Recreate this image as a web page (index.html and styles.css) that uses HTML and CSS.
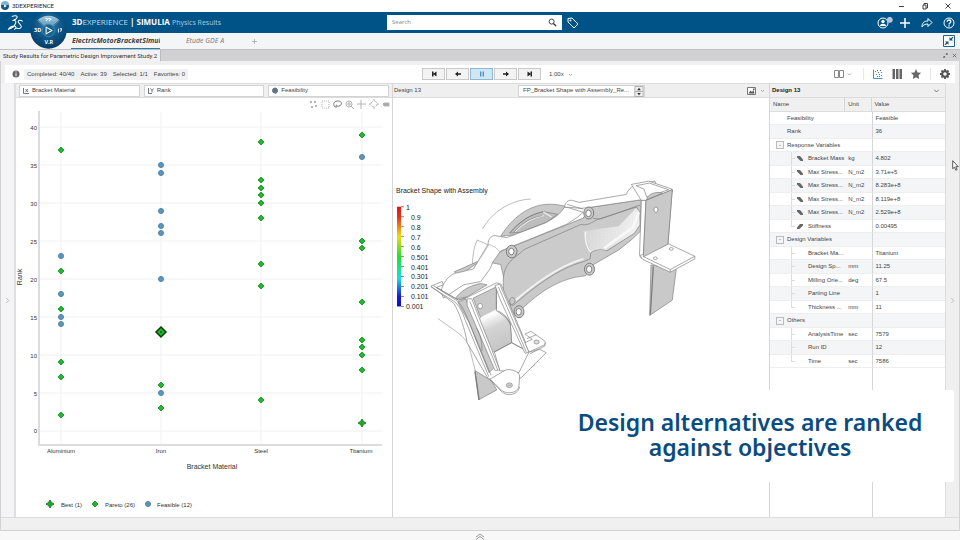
FILE: index.html
```html
<!DOCTYPE html>
<html lang="en">
<head>
<meta charset="utf-8">
<meta name="viewport" content="width=device-width, initial-scale=1">
<title>3DEXPERIENCE</title>
<link rel="stylesheet" href="styles.css">
</head>
<body>
<div class="titlebar">
  <svg class="app-icon" viewBox="0 0 10 10"><circle cx="5" cy="5" r="4" fill="#12598c"/><path d="M1 4a4 4 0 0 1 8 0z" fill="#7fb3d3"/><path d="M4 3.500v3L7 5z" fill="#fff"/></svg>
  <span class="app-name">3DEXPERIENCE</span>
  <div class="window-buttons">
    <button aria-label="Minimize"><svg viewBox="0 0 8 8"><path d="M1 4.500h5" /></svg></button>
    <button aria-label="Restore"><svg viewBox="0 0 8 8"><path d="M2 3h3v4H2zM3 3V1.500h3.500V6H5"/></svg></button>
    <button aria-label="Close"><svg viewBox="0 0 8 8"><path d="M1.500 1.500l5 5m0-5l-5 5"/></svg></button>
  </div>
</div>

<header class="topbar">
  <svg class="ds-logo" viewBox="21 42 50 50" fill="none" stroke="#fff" stroke-width="3" stroke-linecap="round" stroke-linejoin="round">
    <path d="M36 49c6-3 16-3 15 2-1 4-7 8-13 10 8-2 11 3 8 9-3 8-11 14-21 17 3-6 12-11 19-9 5 2 4 7-1 9"/>
    <path d="M66 63c-5-4-13-3-12 2s10 9 9 15c-1 5-9 6-14 3"/>
  </svg>
  <h1 class="brand"><b>3D</b><span>EXPERIENCE</span> <i>|</i> <b>SIMULIA</b> <em>Physics Results</em></h1>
  <div class="search">
    <input type="search" placeholder="Search" aria-label="Search">
    <svg viewBox="0 0 10 10" fill="none" stroke="#333"><circle cx="4" cy="4" r="2.800"/><path d="M6 6l3 3" stroke-width="1.500"/></svg>
  </div>
  <button class="tag" aria-label="Tags"><svg viewBox="0 0 12 12" fill="none" stroke="#fff" stroke-linejoin="round"><path d="M1 1.500l4-.5 6 6-4 4-6-6z"/><circle cx="3.500" cy="3.500" r=".6"/></svg></button>
  <nav class="top-actions">
    <button aria-label="Profile"><svg viewBox="0 0 16 12" fill="none" stroke="#fff"><circle cx="6" cy="6" r="5"/><circle cx="6" cy="4.500" r="1.700" fill="#fff" stroke="none"/><path d="M3 9c0-3 6-3 6 0z" fill="#fff" stroke="none"/><circle cx="12.800" cy="2.800" r="2.900" fill="#b9c6da" stroke="none"/></svg></button>
    <button aria-label="Add"><svg viewBox="0 0 12 12" stroke="#fff" stroke-width="1.500"><path d="M6 1v10M1 6h10"/></svg></button>
    <button aria-label="Share"><svg viewBox="0 0 12 12" fill="none" stroke="#fff" stroke-linejoin="round"><path d="M1 10c0-4 2-6 6-6V1.500l4 4-4 4V7C4 7 2 8 1 10z"/></svg></button>
    <button aria-label="Help"><svg viewBox="0 0 12 12" fill="none" stroke="#fff"><circle cx="6" cy="6" r="5"/><path d="M4.200 4.800c0-2.500 3.600-2.200 3.600-.2C7.800 6 6 6 6 7.500M6 8.300v1.200" stroke-width="1.300"/></svg></button>
  </nav>
  <button class="compass" aria-label="Compass">
    <svg viewBox="0 0 108 108">
      <defs>
        <radialGradient id="ball" cx=".5" cy=".35" r=".65"><stop offset="0" stop-color="#2b80ae"/><stop offset=".6" stop-color="#0e5485"/><stop offset="1" stop-color="#053a64"/></radialGradient>
        <linearGradient id="shine" x2="0" y2="1"><stop offset="0" stop-color="#a5c8da"/><stop offset="1" stop-color="#5a9abf"/></linearGradient>
      </defs>
      <circle cx="54" cy="54" r="53" fill="url(#ball)"/>
      <path d="M21 25a46 46 0 0 1 66 0L69 42a21 21 0 0 0-30 0z" fill="url(#shine)"/>
      <circle cx="54" cy="54" r="18" fill="#176393" stroke="#4f93b8" stroke-width="2"/>
      <path d="M47 44v20l17-10z" fill="none" stroke="#fff" stroke-width="3" stroke-linejoin="round"/>
      <path d="M22 23l17 17M86 23L69 40M25 85l15-16M83 85L68 69" stroke="#0a4573" stroke-width="2"/>
      <path d="M45 18l7 3-6 6M54 18l7 3-6 6" fill="none" stroke="#fff" stroke-width="3"/>
      <path d="M83 49v11M87 50c7-6 6 4 1 7" fill="none" stroke="#dce9f2" stroke-width="3"/>
      <text x="12" y="59">3D</text><text x="42" y="93">V.R</text>
    </svg>
  </button>
</header>

<nav class="tabs">
  <a href="#sim" class="tab active">ElectricMotorBracketSimul</a>
  <a href="#etude" class="tab">Etude GDE A</a>
  <button class="add-tab" aria-label="New tab"><svg viewBox="0 0 6 6" stroke="#aaa"><path d="M3 0v6M0 3h6"/></svg></button>
  <button class="collapse" aria-label="Exit full view"><svg viewBox="0 0 12 12"><path d="M.5.5h11v11H.5z" fill="#fff" stroke="#1d6493"/><path d="M6.500 2v3.500H10L8.800 4.300l1.700-1.700-.9-.9-1.800 1.700zM5.500 10V6.500H2l1.200 1.200-1.700 1.700.9.9 1.800-1.700z" fill="#174f78"/></svg></button>
</nav>

<div class="docbar">
  <h2>Study Results for Parametric Design Improvement Study.2</h2>
  <div class="doc-buttons">
    <button aria-label="Restore panel"><svg viewBox="0 0 6 6"><path d="M3.500.5v2h2L5 2l1-1-1-1zM2.500 5.500v-2h-2L1 4 0 5l1 1z" fill="#666"/></svg></button>
    <button aria-label="Close panel"><svg viewBox="0 0 6 6" stroke="#666"><path d="M1 1l4 4m0-4L1 5"/></svg></button>
  </div>
</div>

<main class="workspace">
  <div class="toolbar">
    <div class="status">
      <svg class="info" viewBox="0 0 8 8"><circle cx="4" cy="4" r="3.500" fill="#666"/><path d="M4 1.500v1M4 3.300v3" stroke="#fff"/></svg>
      <p><span>Completed: 40/40</span><span>Active: 39</span><span>Selected: 1/1</span><span>Favorites: 0</span></p>
    </div>
    <div class="player">
      <button aria-label="First"><svg viewBox="0 0 10 8"><path d="M3 1.500h1.500v5H3zM7.500 1.500v5L4 4z"/></svg></button>
      <button aria-label="Previous"><svg viewBox="0 0 10 8"><path d="M2 4l3-2.500v1.700h3v1.600H5v1.700z"/></svg></button>
      <button class="on" aria-label="Pause"><svg viewBox="0 0 10 8"><path d="M3 1.500h1.400v5H3zM5.600 1.500H7v5H5.600z"/></svg></button>
      <button aria-label="Next"><svg viewBox="0 0 10 8"><path d="M8 4L5 1.500v1.700H2v1.600h3v1.700z"/></svg></button>
      <button aria-label="Last"><svg viewBox="0 0 10 8"><path d="M5.500 1.500H7v5H5.500zM2.500 1.500v5L6 4z"/></svg></button>
      <select class="speed" aria-label="Playback speed"><option>1.00x</option></select>
      <svg class="caret" viewBox="0 0 5 5"><path d="M1 2l1.500 1.500L4 2"/></svg>
    </div>
    <div class="views">
      <button aria-label="Layout"><svg viewBox="0 0 20 12" fill="none" stroke="#888"><path d="M2.500 2.500h4v7h-4zM7.500 2.500h4v7h-4z"/><path d="M16 5.500L17.500 7 19 5.500" stroke="#aaa"/></svg></button>
      <button class="sep" aria-label="Scatter plot"><svg viewBox="0 0 12 12"><path d="M1.500 1.500v9h9" fill="none" stroke="#4b8fb5"/><path d="M3 3h1v1H3zM5 2h1v1H5zM8 2h1v1H8zM6 4h1v1H6zM9 4h1v1H9zM4 6h1v1H4zM7 6h1v1H7zM9 7h1v1H9zM5 8h1v1H5zM7 8h1v1H7z" fill="#357fa8"/></svg></button>
      <button aria-label="Table"><svg viewBox="0 0 12 12"><path d="M1.500 1h2.500v10H1.500zM5 1h2.500v10H5zM8.500 1H11v10H8.500z" fill="#666"/></svg></button>
      <button aria-label="Favorites"><svg viewBox="0 0 12 12"><path d="M6 1l1.500 3.400 3.700.4-2.700 2.500.7 3.700L6 9.200 2.800 11l.7-3.700L.8 4.800l3.700-.4z" fill="#666"/></svg></button>
      <button class="sep settings" aria-label="Settings"><svg viewBox="0 0 12 12"><circle cx="6" cy="6" r="2.800" fill="none" stroke="#555" stroke-width="2"/><path d="M6 1v2M6 9v2M1 6h2M9 6h2M2.500 2.500l1.300 1.300M8.200 8.200l1.300 1.300M9.500 2.500L8.200 3.800M3.800 8.200L2.500 9.500" stroke="#555" stroke-width="1.800"/></svg></button>
    </div>
  </div>

  <div class="panes">
    <button class="gutter" aria-label="Show left panel"><svg viewBox="0 0 6 8"><path d="M1.500 1l3 3-3 3"/></svg></button>

    <section class="chart-pane">
      <div class="pane-head axes">
        <label><svg viewBox="0 0 8 8"><path d="M1.500 1v5.500H7M3.500 2l2.500 3M6 2L3.500 5"/></svg><select aria-label="X axis"><option>Bracket Material</option></select></label>
        <label><svg viewBox="0 0 8 8"><path d="M1.500 1v5.500H5M3.500 1.500L5 3.500l1.500-2M5 3.500v2"/></svg><select aria-label="Y axis"><option>Rank</option></select></label>
        <label><svg viewBox="0 0 8 8"><circle cx="4" cy="3.500" r="2.500" fill="#5d6f80"/><path d="M1.500 4h5L4.500 7"/></svg><select aria-label="Colour"><option>Feasibility</option></select></label>
      </div>
      <svg class="chart" viewBox="16 98 376 419" role="img" aria-label="Rank by bracket material">
        <defs>
          <path id="d" d="M0-3L3 0 0 3-3 0z" fill="#26b532" stroke="#229e2c"/>
          <circle id="c" r="2.500" fill="#5f97bc" stroke="#4b82a8"/>
          <path id="s" d="M0-4L1.500-1.500 4 0 1.500 1.500 0 4-1.500 1.500-4 0-1.500-1.500z" fill="#21a52b" stroke="#1b8524"/>
        </defs>
        <g fill="none" stroke="#b4b4b4">
          <path d="M310 101h2v2h-2zM314 101h2v2h-2zM311 106h2v2h-2zM315 105h2v2h-2z" fill="#b5b5b5" stroke="none"/>
          <path d="M322 101h7v7h-7z" stroke-dasharray="1 1"/>
          <path d="M335 107c-3-4 0-6 3-6 4 0 5 4 1 5-2 1-4-1-2-1M336 106v2" stroke="#777"/>
          <circle cx="349" cy="104" r="3"/><path d="M351 106l3 3M347 104h4M349 102v4"/>
          <path d="M361 100v9M357 104h9"/><circle cx="374" cy="104" r="3" stroke-dasharray="3 1.700"/><path d="M374 99v2M374 107v2M369 104h2M377 104h2"/>
          <path d="M383 104l1-1h5v3h-5z" fill="#a8a8a8"/>
        </g>
        <path class="grid" d="M40 127h343M40 165h343M40 203h343M40 241h343M40 279h343M40 317h343M40 355h343M40 393h343M40 431h343M61 112v332M161 112v332M261 112v332M362 112v332"/>
        <path d="M39 111v334h343" fill="none" stroke="#dcdcdc" stroke-width="2"/>
        <g class="ticks" text-anchor="end">
          <text x="37" y="130">40</text><text x="37" y="168">35</text><text x="37" y="206">30</text><text x="37" y="244">25</text><text x="37" y="282">20</text><text x="37" y="320">15</text><text x="37" y="358">10</text><text x="37" y="396">5</text><text x="37" y="433">0</text>
        </g>
        <g class="ticks" text-anchor="middle">
          <text x="61" y="453">Aluminium</text><text x="161" y="453">Iron</text><text x="261" y="453">Steel</text><text x="361" y="453">Titanium</text>
          <text class="axis-title" x="212" y="469">Bracket Material</text>
          <text class="axis-title" transform="translate(22 277) rotate(-90)">Rank</text>
        </g>
        <g transform="translate(61 0)"><use href="#d" y="150"/><use href="#c" y="256"/><use href="#d" y="271"/><use href="#c" y="294"/><use href="#d" y="309"/><use href="#c" y="317"/><use href="#c" y="324"/><use href="#d" y="362"/><use href="#d" y="377"/><use href="#d" y="415"/></g>
        <g transform="translate(161 0)"><use href="#c" y="165"/><use href="#c" y="173"/><use href="#c" y="211"/><use href="#c" y="226"/><use href="#c" y="233"/><use href="#c" y="279"/><path d="M0 327l5 5-5 5-5-5z" fill="#21b52b" stroke="#0b3b10" stroke-width="1.500"/><circle cy="332" r="1" fill="#0b6b16"/><use href="#d" y="385"/><use href="#c" y="393"/><use href="#d" y="408"/></g>
        <g transform="translate(261 0)"><use href="#d" y="142"/><use href="#d" y="180"/><use href="#d" y="188"/><use href="#d" y="195"/><use href="#d" y="203"/><use href="#d" y="218"/><use href="#d" y="264"/><use href="#d" y="286"/><use href="#d" y="400"/></g>
        <g transform="translate(362 0)"><use href="#d" y="135"/><use href="#c" y="157"/><use href="#d" y="241"/><use href="#d" y="248"/><use href="#d" y="302"/><use href="#d" y="340"/><use href="#d" y="347"/><use href="#d" y="355"/><use href="#d" y="370"/><use href="#s" y="423"/></g>
        <g class="ticks"><use href="#s" x="50" y="504"/><text x="61" y="507">Best (1)</text><use href="#d" x="95" y="504"/><text x="105" y="507">Pareto (26)</text><use href="#c" x="148" y="504"/><text x="157" y="507">Feasible (12)</text></g>
      </svg>
    </section>

    <section class="view-pane">
      <div class="pane-head">
        <h3>Design 13</h3>
        <div class="picker"><select aria-label="Result plot"><option>FP_Bracket Shape with Assembly_Re...</option></select><svg viewBox="0 0 10 12"><path d="M.5.5h9v11h-9zM.5 6h9" fill="#eee" stroke="#aaa"/><path d="M5 2l2 2.500H3zM5 10l2-2.500H3z" fill="#333"/></svg></div>
        <button aria-label="Image"><svg viewBox="0 0 18 8"><path d="M.5.5h8v7h-8z" fill="#fff" stroke="#777"/><path d="M1.500 6.500l2-3L5 5l1.500-2 1 3.500zM6 1.500h1.500V3H6z" fill="#555"/><path d="M14 3l1.500 1.500L17 3" fill="none" stroke="#aaa"/></svg></button>
      </div>
      <svg class="model" viewBox="392 98 377 419" role="img" aria-label="Bracket shape with assembly">
        <defs>
          <linearGradient id="scale" x2="0" y2="1"><stop offset="0" stop-color="#e31313"/><stop offset=".1" stop-color="#e5301a"/><stop offset=".3" stop-color="#f0dc10"/><stop offset=".5" stop-color="#25df2b"/><stop offset=".72" stop-color="#18dfdc"/><stop offset=".9" stop-color="#1818df"/><stop offset="1" stop-color="#0d0dc0"/></linearGradient>
          <linearGradient id="bend" x2=".3" y2="1"><stop offset="0" stop-color="#c6c6c6"/><stop offset=".2" stop-color="#fff"/><stop offset=".5" stop-color="#d4d4d4"/><stop offset="1" stop-color="#c6c6c6"/></linearGradient>
          <linearGradient id="glow" x1="0" x2="1" y2=".2"><stop offset="0" stop-color="#cdcdcd"/><stop offset="1" stop-color="#ededed"/></linearGradient>
          <pattern id="mesh" width="11" height="9" patternUnits="userSpaceOnUse"><path d="M0 4l4-2M6 8l4-3M3 8V6M8 2l2-1" stroke="#fff" stroke-width="1.200"/></pattern>
        </defs>
        <g class="legend">
          <text class="legend-title" x="395" y="193">Bracket Shape with Assembly</text>
          <path d="M396 207h4v100h-4z" fill="url(#scale)"/>
          <path d="M400 207h3M400 217h3M400 227h3M400 237h3M400 247h3M400 257h3M400 267h3M400 277h3M400 287h3M400 297h3M400 307h3" stroke="#888"/>
          <text x="405" y="210">1</text><text x="410" y="220">0.9</text><text x="410" y="230">0.8</text><text x="410" y="240">0.7</text><text x="410" y="250">0.6</text><text x="410" y="260">0.501</text><text x="410" y="270">0.401</text><text x="410" y="280">0.301</text><text x="410" y="290">0.201</text><text x="410" y="300">0.101</text><text x="405" y="310">0.001</text>
        </g>
        <g transform="translate(385 170) scale(.33333)" fill="#c9c9c9" stroke="#7d7d7d" stroke-width="2" stroke-linejoin="round">
          <!-- motor ring behind the bracket -->
          <path d="M290 178c28-48 80-87 145-90M260 285c0-28 5-54 14-74l40 18" fill="none" stroke="#999"/>
          <path d="M345 200c34-56 84-92 135-96 24-2 44 2 60 6l-30 40-110 44z"/>
          <path d="M372 190c30-34 60-56 102-64l42 8-34 24-78 30z" fill="#bdbdbd"/>
          <path d="M388 186c28-28 54-44 86-48M472 126l26 16" fill="none" stroke="#eee" stroke-width="4"/>
          <path d="M372 190c30-34 60-56 102-64M384 188c28-30 56-46 86-50" fill="none"/>
          <!-- front rim -->
          <path d="M362 238L592 146l28-34 148-22-3 95-25 24-40 32-76 44-24 34c-80 6-140 52-188 96l-32 20-35-150-60-12-65 46-15-12z"/>
          <!-- recessed web -->
          <path d="M353 350c-2-30 2-52 20-74 12-12 26-20 42-36l172-76c18 6 32-6 48-14l118-38 10 14 1 40-16 24-84 54c-16-8-36-4-48 6l-2 18-20 8c-80 22-152 80-212 132-22-8-30-28-29-58z" fill="#cbcbcb"/>
          <path d="M594 184l106-14 52-54 10 10v40l-16 24-84 52c-14-6-34-4-46 6z" fill="url(#glow)" stroke="none"/>
          <path d="M594 184l106-14 52-54 10 10v40l-16 24-84 52c-14-6-34-4-46 6z" fill="url(#mesh)" stroke="none"/>
          <path d="M760 128l-18 46-86 62" fill="none" stroke="#f8f8f8" stroke-width="8"/>
          <path d="M594 268c-76 22-148 76-204 124" fill="none" stroke="#f2f2f2" stroke-width="6"/>
          <path d="M600 186c-4 20 4 50 16 62" fill="none" stroke="#f6f6f6" stroke-width="4"/>
          <!-- white top faces -->
          <path d="M165 366c8-30 26-54 54-57l44-11 44-74c0-14 8-26 22-26l34 6 116-44c30-16 46-28 58-48l12 2 44 14-16 14-34 22-148 60-50 20-24 34-8 20-28 38-52 10-60 40z" fill="#fff"/>
          <path d="M307 224c14 4 30 12 38 26M263 298l46-72" fill="none" stroke="#aaa"/>
          <path d="M537 112c2-14 10-22 24-20l20 6 142-24c4-16 22-30 50-34l36-6 12 36-53 20-148 22-32 4z" fill="#fff"/>
          <path d="M545 104l48 14" fill="none"/>
          <path d="M622 146l22 2 120-42" fill="none"/>
          <!-- bolt bosses -->
          <g stroke-width="3"><ellipse cx="378" cy="246" rx="16" ry="19"/><ellipse cx="377" cy="246" rx="8" ry="10" fill="#fff"/><ellipse cx="610" cy="130" rx="15" ry="18"/><ellipse cx="609" cy="131" rx="8" ry="10" fill="#fff"/><ellipse cx="612" cy="299" rx="15" ry="18"/><ellipse cx="611" cy="299" rx="8" ry="10" fill="#fff"/><ellipse cx="400" cy="427" rx="15" ry="18"/><ellipse cx="399" cy="427" rx="8" ry="10" fill="#fff"/></g>
          <path d="M372 398c-2-16 14-18 16-6 0 10-8 14-12 14z"/>
          <!-- right mounting bracket -->
          <path d="M797 286l76 14-12 92-68 46z"/><path d="M804 290l-9 146" fill="none" stroke-width="4"/>
          <path d="M738 44l52-10 70 24 2 8-80 26-14 0z" fill="#fff"/>
          <path d="M752 48l40-8 58 20-66 22-8-24z" fill="#fff"/>
          <path d="M784 90c2-16 24-26 48-20z"/>
          <path d="M782 92l79-32-13 164-74 38z"/>
          <path d="M768 92h14l-8 170-6 4c-6-6-6-14-5-22z" fill="#fff"/>
          <path d="M764 258l84-36 81 38v8l-74 40-82-38z" fill="#fff"/>
          <path d="M776 262l79 38 74-40M855 300v8" fill="none"/>
          <path d="M782 92l79-32-13 164-74 38z"/>
          <g fill="#fff"><ellipse cx="812" cy="120" rx="6" ry="8"/><ellipse cx="858" cy="238" rx="6" ry="4"/><ellipse cx="810" cy="266" rx="6" ry="4"/></g>
          <!-- left mounting bracket -->
          <path d="M157 448c46 34 86 54 94 88l18 70" fill="none" stroke="#999"/>
          <path d="M267 604l50 30 16 28-54 30z"/><path d="M268 608l12 84" fill="none" stroke-width="4"/>
          <path d="M398 608l48-56v36l-44 26z"/>
          <path d="M206 390c18-24 40-40 78-48l20 4-60 36z"/>
          <path d="M135 350l34-14 3 10-20 8 66 38 22-6 92-46 14 4 86 204 30-8 20 10-76 76-70 20-30-20-62-106c-6-36-22-90-40-118z" fill="#fff"/>
          <path d="M152 354l66 38 24-8" fill="none"/>
          <path d="M216 398l24-10 86 206-16 16-60-150z"/>
          <path d="M262 386l70-34v72c26 16 40 32 42 42l4 54-54 28z"/>
          <path d="M284 444l50-26c26 14 40 30 42 46l2 56-54 28-40-80z" fill="url(#bend)" stroke="none"/>
          <path d="M332 352v72c26 16 40 32 42 42l4 54M336 424c14 6 32 22 38 42" fill="none"/>
          <path d="M326 548l52-28 52 28-30 62-58-6z" fill="#fff"/>
          <path d="M326 548l52-28 52 28" fill="none"/>
          <path d="M244 388h14l84 214-14 2-84-196z" fill="#fff"/>
          <path d="M252 396l84 206" fill="none"/>
          <path d="M328 348l14-4 88 204-12 4-74-160z" fill="#fff"/>
          <path d="M338 352l84 196" fill="none"/>
          <path d="M272 476c12 16 18 50 16 70" fill="none"/>
          <path d="M135 352l70 44c18 14 26 36 34 58l70 168M142 348l74 48c14 12 22 34 30 52l70 170" fill="none"/>
          <path d="M418 494l18-8 40 28c6 4 4 12-2 14l-44 20-12-28 22-10z" fill="#fff"/>
          <path d="M424 508l28-12M478 520v10l-46 24" fill="none"/>
          <ellipse cx="453" cy="518" rx="8" ry="6" fill="#ddd"/>
          <path d="M312 630l48-28c20-4 40 6 42 18l-2 28c-2 20-20 24-38 22-16-2-28-24-50-40z" fill="#fff"/>
          <path d="M312 632c24 18 34 42 54 44 18 2 34-8 36-24" fill="none"/>
          <ellipse cx="371" cy="648" rx="9" ry="7" fill="#ddd"/><path d="M366 648h10" />
          <ellipse cx="283" cy="410" rx="7" ry="8" fill="#fff"/>
        </g>
      </svg>
    </section>

    <section class="props-pane">
      <div class="pane-head"><h3><b>Design 13</b></h3><button aria-label="Collapse properties"><svg class="caret dark" viewBox="0 0 5 5"><path d="M0 1.500L2.500 4 5 1.500"/></svg></button></div>
      <table>
        <colgroup><col class="name"><col class="unit"><col class="value"></colgroup>
        <thead><tr><th>Name</th><th>Unit</th><th>Value</th></tr></thead>
        <tbody>
          <tr class="top"><td>Feasibility</td><td></td><td>Feasible</td></tr>
          <tr class="top"><td>Rank</td><td></td><td>36</td></tr>
          <tr class="group"><td colspan="2"><button aria-label="Collapse Response Variables">-</button>Response Variables</td><td></td></tr>
          <tr class="leaf out"><td>Bracket Mass</td><td>kg</td><td>4.802</td></tr>
          <tr class="leaf out"><td>Max Stress...</td><td>N_m2</td><td>3.71e+5</td></tr>
          <tr class="leaf out"><td>Max Stress...</td><td>N_m2</td><td>8.283e+8</td></tr>
          <tr class="leaf out"><td>Max Stress...</td><td>N_m2</td><td>8.119e+8</td></tr>
          <tr class="leaf out"><td>Max Stress...</td><td>N_m2</td><td>2.529e+8</td></tr>
          <tr class="leaf out up last"><td>Stiffness</td><td></td><td>0.00495</td></tr>
          <tr class="group"><td colspan="2"><button aria-label="Collapse Design Variables">-</button>Design Variables</td><td></td></tr>
          <tr class="leaf"><td>Bracket Ma...</td><td></td><td>Titanium</td></tr>
          <tr class="leaf"><td>Design Sp...</td><td>mm</td><td>11.25</td></tr>
          <tr class="leaf"><td>Milling Orie...</td><td>deg</td><td>67.5</td></tr>
          <tr class="leaf"><td>Parting Line</td><td></td><td>1</td></tr>
          <tr class="leaf last"><td>Thickness ...</td><td>mm</td><td>11</td></tr>
          <tr class="group"><td colspan="2"><button aria-label="Collapse Others">-</button>Others</td><td></td></tr>
          <tr class="leaf"><td>AnalysisTime</td><td>sec</td><td>7579</td></tr>
          <tr class="leaf"><td>Run ID</td><td></td><td>12</td></tr>
          <tr class="leaf last"><td>Time</td><td>sec</td><td>7586</td></tr>
        </tbody>
      </table>
      <div class="props-rest"></div>
    </section>

    <button class="gutter right" aria-label="Show right panel"><svg viewBox="0 0 6 8"><path d="M1.500 1l3 3-3 3"/></svg></button>
  </div>
</main>

<footer><button aria-label="Show action bar"><svg viewBox="0 0 10 7" fill="none" stroke="#999"><path d="M1 4l4-3 4 3M1 6.500l4-3 4 3"/></svg></button></footer>

<p class="caption">Design alternatives are ranked<br>against objectives</p>
<svg class="pointer" viewBox="0 0 7 11"><path d="M.7.700v8l1.800-1.500L3.800 10.200l1.300-.6L3.800 6.700h2.500z" fill="#fff" stroke="#333" stroke-width=".8"/></svg>
</body>
</html>
```

FILE: styles.css
```css
* { box-sizing: border-box; }
body {
  margin: 0;
  min-height: 100vh;
  position: relative;
  display: flex;
  flex-direction: column;
  overflow: hidden;
  background: #fafafa;
  color: #444;
  font: 6px/9px "Liberation Sans", Arial, sans-serif;
}
h1, h2, h3, p { margin: 0; font-weight: normal; font-size: inherit; }
button, select, input { font: inherit; color: inherit; border: 0; padding: 0; margin: 0; background: none; border-radius: 0; }
select { appearance: none; min-width: 0; }
svg { display: block; }
button { display: flex; align-items: center; justify-content: center; }

.titlebar { display: flex; align-items: center; height: 12px; background: #fff; }
.app-icon { width: 10px; height: 10px; }
.app-name { margin-left: 2px; font: 6px/10px Roboto, sans-serif; color: #222; }
.window-buttons { margin-left: auto; display: flex; gap: 15px; padding-right: 8px; }
.window-buttons svg { width: 8px; height: 8px; fill: none; stroke: #444; }

.topbar { position: relative; display: flex; align-items: center; height: 21px; padding: 0 5px 0 7px; background: #005386; }
.ds-logo { width: 17px; height: 17px; }
.brand { margin-left: 48px; width: 315px; font: 8px/12px "Open Sans", sans-serif; color: #c3dcea; white-space: nowrap; }
.brand b { font-weight: 700; color: #fff; }
.brand i { font-style: normal; font-weight: 700; color: #fff; }
.brand em { font: 7px/12px "Open Sans", sans-serif; color: #a9cbe0; }
.search { display: flex; align-items: center; width: 175px; height: 15px; padding: 0 5px; background: #fff; }
.search input { flex: 1; min-width: 0; outline: 0; font: 6px/11px "Open Sans", sans-serif; }
.search input::placeholder { color: #8a8a8a; }
.search svg { width: 9px; height: 9px; }
.tag { margin-left: 5px; }
.tag svg, .top-actions svg { width: 12px; height: 12px; }
.top-actions { margin-left: auto; display: flex; gap: 10px; }
.top-actions button:first-child { margin-right: -4px; }
.top-actions button:first-child svg { width: 16px; }
.compass { position: absolute; left: 30px; top: 0; }
.compass svg { width: 37px; height: 37px; }
.compass text { fill: #fff; font: bold 16px "Open Sans", sans-serif; }

.tabs { display: flex; align-items: stretch; height: 16px; padding: 0 5px 0 71px; background: #f4f5f7; font: italic 7px/15px "Open Sans", sans-serif; }
.tab { color: #777; text-decoration: none; }
.tab.active { width: 89px; margin-right: 26px; padding-left: 1px; overflow: hidden; border-bottom: 1px solid #1f7fae; font-weight: 700; color: #444; white-space: nowrap; }
.add-tab { margin-left: 28px; }
.add-tab svg { width: 5px; height: 5px; }
.collapse { margin-left: auto; }
.collapse svg { width: 12px; height: 12px; }

.docbar { display: flex; height: 12px; background: #d1d1d3; border-top: 1px solid #c0c0c2; }
.docbar h2 { padding: 0 3px; background: #f1f1f2; border-right: 1px solid #bbb; font: 6px/12px Roboto, sans-serif; color: #333; white-space: nowrap; }
.doc-buttons { display: flex; gap: 4px; margin-left: auto; padding-right: 3px; }
.doc-buttons svg { width: 5px; height: 5px; }

.workspace { flex: 1; display: flex; flex-direction: column; padding: 4px 0 12px; background: #f0f0f1; border: solid #d2d2d4; border-width: 0 1px 1px; }
.toolbar { display: grid; grid-template-columns: 1fr 150px 1fr; align-items: center; height: 18px; margin: 0 4px; background: #fff; }
.status { display: flex; align-items: center; gap: 4px; padding-left: 7px; }
.info { width: 8px; height: 8px; }
.status p { display: flex; gap: 6px; padding: 1px 3px; background: #f1f1f1; white-space: nowrap; }
.player { display: flex; align-items: center; gap: 1px; margin-left: 17px; }
.player button { flex: none; width: 23px; height: 12px; background: #f3f3f3; border: 1px solid #c9c9c9; }
.player button svg { width: 10px; height: 8px; fill: #222; }
.player .on { background: #cfe6f5; border-color: #8db7d2; }
.player .on svg { fill: #4d96be; }
.speed { flex: none; width: 18px; margin-left: 7px; }
.caret { flex: none; width: 5px; height: 5px; fill: none; stroke: #aaa; }
.caret.dark { stroke: #777; }
.views { display: flex; justify-content: flex-end; gap: 7px; padding-right: 4px; }
.views svg { width: 12px; height: 12px; }
.views button:first-child svg { width: 20px; }
.views .sep { padding-left: 8px; border-left: 1px solid #e8e8e8; margin-left: 4px; }
.views .settings { margin-left: 1px; }

.panes { flex: 1; display: grid; grid-template-columns: 15px minmax(0, 376fr) minmax(0, 377fr) minmax(0, 176fr) 14px; border-bottom: 1px solid #dcdcdc; }
.gutter { background: #f4f4f6; border-right: 2px solid #dedee0; }
.gutter.right { border: 0; border-left: 1px solid #dcdcdc; background: #efeff0; }
.gutter svg { width: 5px; height: 7px; fill: none; stroke: #b0b0b0; }
.chart-pane, .view-pane, .props-pane { display: flex; flex-direction: column; background: #fff; }
.view-pane, .props-pane { border-left: 1px solid #d6d6d6; }
.pane-head { display: flex; align-items: center; height: 15px; background: #efeff0; border: solid #dcdcdc; border-width: 1px 0; }
.axes { gap: 4px; padding: 0 3px; }
.axes label { flex: 1; display: flex; align-items: center; height: 12px; padding-left: 2px; background: #fff; border: 1px solid #d3d3d3; }
.axes svg { width: 8px; height: 8px; fill: none; stroke: #68788a; }
.axes select { flex: 1; padding-left: 2px; }
.chart, .model { width: 100%; height: auto; }
.chart text { font: 6px "Liberation Sans", Arial, sans-serif; fill: #333; }
.chart .axis-title { font-size: 7px; }
.grid { fill: none; stroke: #f0f0f3; }

.view-pane h3 { flex: none; padding-left: 1px; width: 125px; }
.picker { flex: 1; min-width: 0; display: flex; height: 12px; background: #fff; border: 1px solid #d3d3d3; }
.picker select { flex: 1; padding-left: 4px; }
.picker svg { flex: none; width: 10px; height: 11px; }
.view-pane .pane-head button { flex: none; margin: 0 4px 0 102px; }
.view-pane .pane-head button svg { width: 18px; height: 8px; }
.legend text { font: 7px "Liberation Sans", Arial, sans-serif; fill: #222; }

.props-pane h3 { flex: 1; padding-left: 2px; color: #222; }
.props-pane .pane-head button { margin-right: 6px; }
table { width: 100%; border-collapse: separate; border-spacing: 0; table-layout: fixed; }
.name { width: 43%; }
.unit { width: 15%; }
.value { width: 42%; }
th { height: 14px; padding: 0 3px; text-align: left; font-weight: normal; background: #f0f0f1; border-right: 1px solid #d6d6d6; border-bottom: 1px solid #dcdcdc; }
td { position: relative; height: 13px; padding: 0 3px; white-space: nowrap; border-bottom: 1px solid #eeeeef; }
tr:nth-child(even) td { height: 14px; background: #f4f5f7; }
td:last-child { border-left: 1px solid #d6d6d6; }
th:last-child { border-right: 0; }
.top td:first-child { padding-left: 17px; }
.group td:first-child { padding-left: 6px; }
.group button { display: inline-block; width: 8px; height: 8px; margin-right: 3px; line-height: 5px; background: #f5f5f5; border: 1px solid #bbb; }
.leaf td:first-child { padding: 0 0 0 38px; }
.leaf td:first-child::before { content: ""; position: absolute; left: 21px; top: 0; width: 4px; height: 100%; background: linear-gradient(#ddd, #ddd) 0 50% / 4px 1px no-repeat, linear-gradient(#ddd, #ddd) 0 0 / 1px 100% no-repeat; }
.leaf.last td:first-child::before { background-size: 4px 1px, 1px 50%; }
.out td:first-child::after { content: ""; position: absolute; left: 27px; top: 4px; width: 6px; height: 5px; background: #666; clip-path: polygon(0 0, 50% 0, 100% 70%, 100% 100%, 60% 100%, 0 30%); }
.out.up td:first-child::after { clip-path: polygon(100% 0, 50% 0, 0 70%, 0 100%, 40% 100%, 100% 30%); }
.props-rest { flex: 1; margin-left: 58%; border-left: 1px solid #d6d6d6; }

footer { display: flex; justify-content: center; height: 10px; background: #f8f8f9; }
footer svg { width: 10px; height: 7px; }

.caption { position: absolute; right: 6px; bottom: 59px; width: 408px; height: 92px; padding: 20px 0; background: #fff; color: #0b4c80; font: 600 23px/25px "Noto Sans", "Open Sans", sans-serif; text-align: center; }
.pointer { position: absolute; right: 1px; top: 160px; width: 7px; height: 11px; }
```
